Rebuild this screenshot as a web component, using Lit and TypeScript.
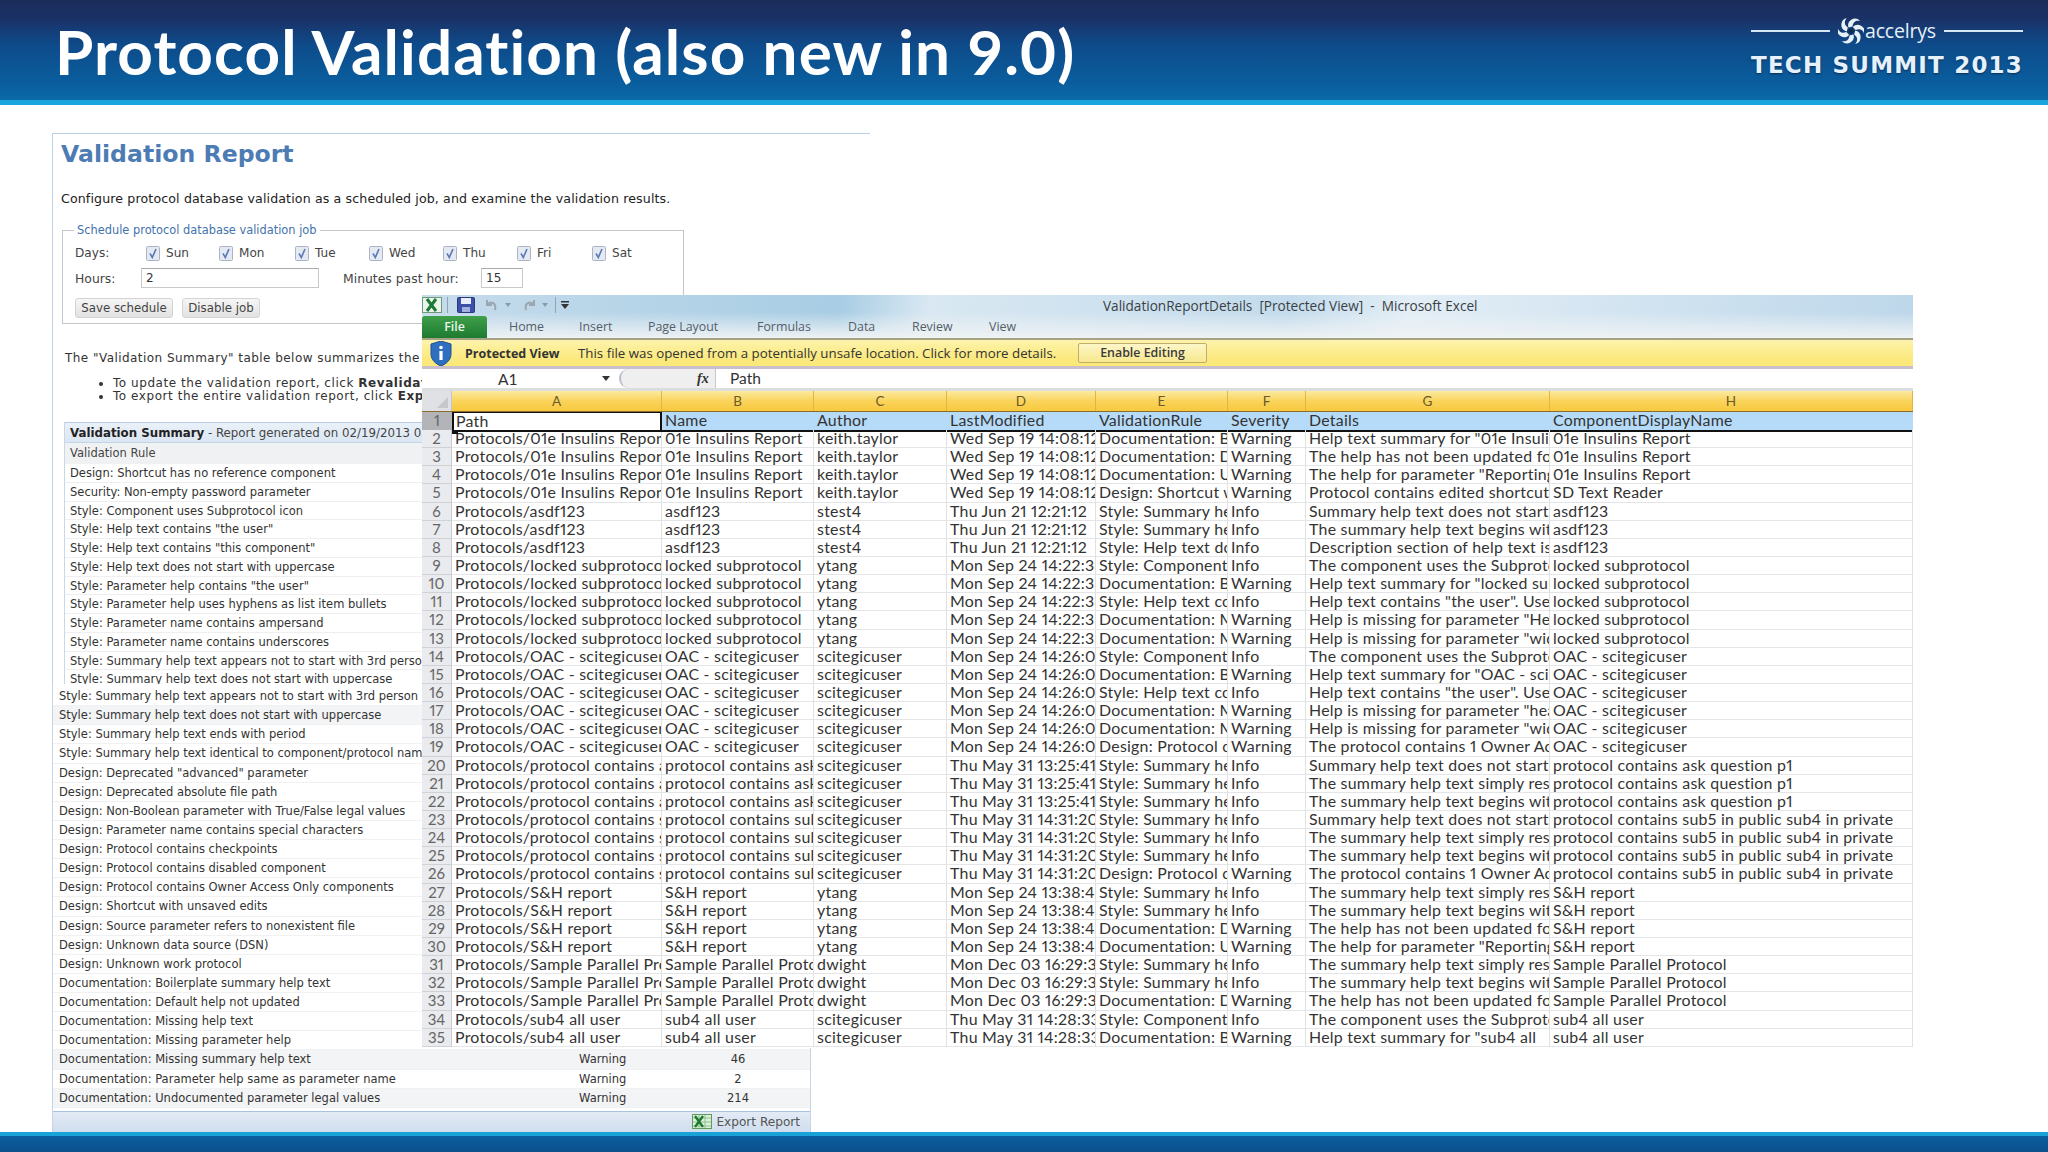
import { LitElement, html, css, svg } from "lit";
import { customElement } from "lit/decorators.js";

const RULES_TOP = [
  "Design: Shortcut has no reference component",
  "Security: Non-empty password parameter",
  "Style: Component uses Subprotocol icon",
  'Style: Help text contains "the user"',
  'Style: Help text contains "this component"',
  "Style: Help text does not start with uppercase",
  'Style: Parameter help contains "the user"',
  "Style: Parameter help uses hyphens as list item bullets",
  "Style: Parameter name contains ampersand",
  "Style: Parameter name contains underscores",
  "Style: Summary help text appears not to start with 3rd person",
  "Style: Summary help text does not start with uppercase",
];
const RULES_BOTTOM: [string, string, string][] = [
  ["Style: Summary help text appears not to start with 3rd person", "", ""],
  ["Style: Summary help text does not start with uppercase", "", ""],
  ["Style: Summary help text ends with period", "", ""],
  ["Style: Summary help text identical to component/protocol name", "", ""],
  ['Design: Deprecated "advanced" parameter', "", ""],
  ["Design: Deprecated absolute file path", "", ""],
  ["Design: Non-Boolean parameter with True/False legal values", "", ""],
  ["Design: Parameter name contains special characters", "", ""],
  ["Design: Protocol contains checkpoints", "", ""],
  ["Design: Protocol contains disabled component", "", ""],
  ["Design: Protocol contains Owner Access Only components", "", ""],
  ["Design: Shortcut with unsaved edits", "", ""],
  ["Design: Source parameter refers to nonexistent file", "", ""],
  ["Design: Unknown data source (DSN)", "", ""],
  ["Design: Unknown work protocol", "", ""],
  ["Documentation: Boilerplate summary help text", "", ""],
  ["Documentation: Default help not updated", "", ""],
  ["Documentation: Missing help text", "", ""],
  ["Documentation: Missing parameter help", "", ""],
  ["Documentation: Missing summary help text", "Warning", "46"],
  ["Documentation: Parameter help same as parameter name", "Warning", "2"],
  ["Documentation: Undocumented parameter legal values", "Warning", "214"],
];

const DOC_B = "Documentation: Boilerplate";
const DOC_D = "Documentation: Default";
const DOC_U = "Documentation: Undocumented";
const DOC_M = "Documentation: Missing";
const SUM = "Style: Summary help";
const COMP = "Style: Component";
const HELPC = "Style: Help text contains";
const PROT = "Design: Protocol contains";
const G_START = "Summary help text does not start";
const G_BEGIN = "The summary help text begins with";
const G_SIMPLY = "The summary help text simply restates";
const G_COMP = "The component uses the Subprotocol";
const G_USER = 'Help text contains "the user". Use';
const G_OWNER = "The protocol contains 1 Owner Access";
const G_UPD = "The help has not been updated for";
const G_REP = 'The help for parameter "Reporting';

type Group = { a: string; b: string; c: string; d: string; rows: [string, string, string, string?][] };
const GROUPS: Group[] = [
  { a: "Protocols/01e Insulins Report", b: "01e Insulins Report", c: "keith.taylor", d: "Wed Sep 19 14:08:12 PDT", rows: [
    [DOC_B, "Warning", 'Help text summary for "01e Insulins'],
    [DOC_D, "Warning", G_UPD],
    [DOC_U, "Warning", G_REP],
    ["Design: Shortcut with", "Warning", "Protocol contains edited shortcuts", "SD Text Reader"],
  ] },
  { a: "Protocols/asdf123", b: "asdf123", c: "stest4", d: "Thu Jun 21 12:21:12", rows: [
    [SUM, "Info", G_START],
    [SUM, "Info", G_BEGIN],
    ["Style: Help text does", "Info", "Description section of help text is"],
  ] },
  { a: "Protocols/locked subprotocol", b: "locked subprotocol", c: "ytang", d: "Mon Sep 24 14:22:38 PDT", rows: [
    [COMP, "Info", G_COMP],
    [DOC_B, "Warning", 'Help text summary for "locked sub'],
    [HELPC, "Info", G_USER],
    [DOC_M, "Warning", 'Help is missing for parameter "Header'],
    [DOC_M, "Warning", 'Help is missing for parameter "width'],
  ] },
  { a: "Protocols/OAC - scitegicuser", b: "OAC - scitegicuser", c: "scitegicuser", d: "Mon Sep 24 14:26:00 PDT", rows: [
    [COMP, "Info", G_COMP],
    [DOC_B, "Warning", 'Help text summary for "OAC - scitegic'],
    [HELPC, "Info", G_USER],
    [DOC_M, "Warning", 'Help is missing for parameter "header'],
    [DOC_M, "Warning", 'Help is missing for parameter "width'],
    [PROT, "Warning", G_OWNER],
  ] },
  { a: "Protocols/protocol contains ask question p1", b: "protocol contains ask question p1", c: "scitegicuser", d: "Thu May 31 13:25:41", rows: [
    [SUM, "Info", G_START],
    [SUM, "Info", G_SIMPLY],
    [SUM, "Info", G_BEGIN],
  ] },
  { a: "Protocols/protocol contains sub5 in public", b: "protocol contains sub5 in public sub4 in private", c: "scitegicuser", d: "Thu May 31 14:31:20 PDT", rows: [
    [SUM, "Info", G_START],
    [SUM, "Info", G_SIMPLY],
    [SUM, "Info", G_BEGIN],
    [PROT, "Warning", G_OWNER],
  ] },
  { a: "Protocols/S&H report", b: "S&H report", c: "ytang", d: "Mon Sep 24 13:38:48 PDT", rows: [
    [SUM, "Info", G_SIMPLY],
    [SUM, "Info", G_BEGIN],
    [DOC_D, "Warning", G_UPD],
    [DOC_U, "Warning", G_REP],
  ] },
  { a: "Protocols/Sample Parallel Protocol", b: "Sample Parallel Protocol", c: "dwight", d: "Mon Dec 03 16:29:38 PST", rows: [
    [SUM, "Info", G_SIMPLY],
    [SUM, "Info", G_BEGIN],
    [DOC_D, "Warning", G_UPD],
  ] },
  { a: "Protocols/sub4 all user", b: "sub4 all user", c: "scitegicuser", d: "Thu May 31 14:28:33 PDT", rows: [
    [COMP, "Info", G_COMP],
    [DOC_B, "Warning", 'Help text summary for "sub4 all'],
  ] },
];
const ROWS: string[][] = GROUPS.flatMap((g) =>
  g.rows.map((r) => [g.a, g.b, g.c, g.d, r[0], r[1], r[2], r[3] ?? g.b])
);
const HEAD = ["Path", "Name", "Author", "LastModified", "ValidationRule", "Severity", "Details", "ComponentDisplayName"];
const DAYS = ["Sun", "Mon", "Tue", "Wed", "Thu", "Fri", "Sat"];
const TABS = ["Home", "Insert", "Page Layout", "Formulas", "Data", "Review", "View"];
const BLADES = [0, 60, 120, 180, 240, 300];

@customElement("app-root")
export class AppRoot extends LitElement {
  static styles = css`
    :host { display: block; position: relative; width: 2048px; height: 1152px; overflow: hidden; background: #fff; font-family: "DejaVu Sans", sans-serif; }
    .page { display: flex; flex-direction: column; height: 1152px; }

    .banner { height: 100px; flex: none; display: flex; justify-content: space-between; padding: 0 25px 0 55px;
      background: linear-gradient(180deg, #1b2c5a 0%, #1a3166 18%, #0e4b8a 45%, #0a5c9c 80%, #0b69a8 100%); border-bottom: 5px solid #1aa6dc; }
    .title { margin: 0; font-family: Lato, sans-serif; font-weight: 700; font-size: 62px; line-height: 102px; color: #fff; white-space: nowrap; letter-spacing: 1.1px; }
    .logo { width: 272px; display: flex; flex-direction: column; padding-top: 17px; box-sizing: border-box; }
    .logo-top { display: flex; align-items: center; height: 28px; gap: 8px; }
    .logo-line { flex: 1; height: 1.5px; background: #d6e8f5; }
    .logo-name { font-family: "Open Sans", sans-serif; font-size: 19.5px; color: #e6f0f8; line-height: 28px; letter-spacing: -0.2px; margin-left: -7px; }
    .logo-sub { font-family: "DejaVu Sans", sans-serif; font-weight: 700; font-size: 23px; line-height: 28px; margin-top: 6px; color: #e6f2fb; white-space: nowrap; letter-spacing: 1.2px; text-shadow: 0 1px 2px #0a2c55; }

    .main { flex: 1; min-height: 0; display: flex; flex-direction: column; padding: 28px 0 0 52px; box-sizing: border-box; }
    .report { width: 818px; height: 551px; flex: none; box-sizing: border-box; overflow: hidden; border-top: 1px solid #b9cfe8; border-left: 1px solid #bcd0e8; color: #222; font-size: 12.6px; }
    .report h2 { margin: 6px 0 0 8px; font-size: 23.6px; line-height: 28px; height: 28px; color: #4d7cb4; font-weight: 700; white-space: nowrap; }
    .intro { margin: 23px 0 0 8px; line-height: 16px; white-space: nowrap; letter-spacing: 0.13px; }
    fieldset { margin: 16px 0 0 9px; padding: 7px 0 6px 12px; width: 622px; height: 101px; box-sizing: border-box; border: 1px solid #c3c6ca; min-width: 0; }
    legend { margin-left: -1px; padding: 0 3px; color: #4373ab; font-size: 11.4px; line-height: 14px; white-space: nowrap; }
    .days { display: grid; grid-template-columns: 71px 73px 76px 74px 74px 74px 75px auto; height: 18px; align-items: center; font-size: 12.1px; color: #444; }
    .day { display: flex; align-items: center; gap: 6px; }
    .cb { width: 14px; height: 15px; display: block; flex: none; }
    .hours { display: flex; align-items: center; margin-top: 6px; height: 20px; font-size: 12.4px; color: #444; }
    .hours .lb1 { width: 66px; }
    .hours .lb2 { width: 138px; margin-left: 24px; white-space: nowrap; }
    .inp { height: 20px; box-sizing: border-box; border: 1px solid #c9c9c9; border-top-color: #aaa; padding-left: 4px; line-height: 18px; background: #fff; font-size: 12px; color: #333; }
    .inp.h { width: 178px; } .inp.m { width: 42px; }
    .btns { display: flex; gap: 9px; margin-top: 10px; }
    .btn { height: 20px; line-height: 19px; box-sizing: border-box; border: 1px solid #d4d4d4; border-radius: 3px; background: linear-gradient(#f6f6f6, #e2e2e2); text-align: center; font-size: 11.8px; color: #444; white-space: nowrap; }
    .btn.s { width: 98px; } .btn.d { width: 78px; }
    .para { margin: 26px 0 0 12px; line-height: 16px; font-size: 12px; white-space: nowrap; color: #333; letter-spacing: 0.45px; }
    .list { margin: 11px 0 0 47px; padding: 0 0 0 13px; line-height: 13px; font-size: 12px; color: #333; letter-spacing: 0.55px; white-space: nowrap; }
    .list li { padding: 0; }
    .sum { margin: 19px 0 0 11px; width: 760px; border-left: 1px solid #c8d8ea; }
    .sum-h { height: 21px; line-height: 20px; box-sizing: border-box; padding-left: 5px; background: linear-gradient(#e9f0f8, #dce7f3); border-top: 1px solid #b7cde4; border-bottom: 1px solid #c3d5e8; font-size: 11.8px; color: #444; white-space: nowrap; }
    .sum-h b { color: #222; }
    .sum-c { height: 21px; line-height: 20px; padding-left: 5px; background: #f0f1f2; font-size: 11.5px; color: #444; }
    .sum-r { height: 18.75px; line-height: 18px; padding-left: 5px; font-size: 11.5px; color: #333; border-bottom: 1px solid #efefef; box-sizing: border-box; white-space: nowrap; }

    .lower { width: 759px; flex: 1; min-height: 0; display: flex; flex-direction: column; box-sizing: border-box; padding-top: 3px; border-left: 1px solid #c5d6e9; border-right: 1px solid #c5d6e9; }
    .lr { display: grid; grid-template-columns: 520px 100px 118px; height: 19.13px; flex: none; line-height: 19px; padding-left: 6px; font-size: 11.5px; color: #333; white-space: nowrap; box-sizing: border-box; border-bottom: 1px solid #f1f1f1; }
    .lr.alt { background: #f3f4f5; }
    .lr .n { text-align: center; }
    .lfoot { margin-top: 3px; flex: 1; display: flex; justify-content: flex-end; align-items: center; gap: 4px; padding-right: 10px; border-top: 1px solid #a8c3df; background: linear-gradient(#e3ebf5, #cfdded); font-size: 12.1px; color: #555; }

    .foot { height: 20px; flex: none; box-sizing: border-box; border-top: 4px solid #19a2d8; background: linear-gradient(#0a5f9f, #0c4f8c); }

    .xl { position: absolute; left: 422px; top: 295px; width: 1491px; height: 753px; background: #fff; font-family: Lato, sans-serif; color: #333; overflow: hidden; }
    .xtitle { height: 20px; display: flex; align-items: center; }
    .xtop { height: 43px; background: linear-gradient(100deg, #c6dcec 0%, #a8cde4 28%, #d9e8f2 34%, #c3dbec 58%, #e3eef6 66%, #bdd7ea 100%); }
    .xtop-fade { background: linear-gradient(transparent 40%, #eef2f4 100%); height: 43px; display: flex; flex-direction: column; }
    .xic { display: block; flex: none; }
    .sep { width: 1px; height: 16px; background: #8fa3b4; flex: none; }
    .sep.a { margin: 0 9px 0 5px; } .sep.b { margin: 0 5px 0 7px; }
    .ml10 { margin-left: 10px; } .ml6 { margin-left: 6px; } .ml11 { margin-left: 11px; }
    .xname { font-family: "Open Sans", sans-serif; font-size: 13.6px; color: #3a3f44; white-space: pre; margin-left: 534px; }
    .tabs { height: 23px; margin-top: 0; display: grid; grid-template-columns: 65px 22px 70px 69px 109px 91px 64px 77px 1fr; align-items: center; font-family: "Open Sans", sans-serif; font-size: 12.4px; color: #555e6a; }
    .file { height: 22px; align-self: end; background: linear-gradient(#3fa04a, #1d7a30); border-radius: 3px 3px 0 0; color: #eaf6ea; text-align: center; line-height: 21px; font-weight: 600; }
    .ybar { height: 31px; box-sizing: border-box; display: flex; align-items: center; background: linear-gradient(#fdf3ad, #fbe97f 70%, #fae877); border-top: 2px solid #a7a283; border-bottom: 3px solid #cabfcc; font-family: "Open Sans", sans-serif; font-size: 13.3px; color: #333; padding-left: 8px; }
    .ybar b { margin-left: 13px; font-weight: 700; font-size: 12.5px; width: 113px; white-space: nowrap; }
    .ybtn { margin-left: 15px; width: 129px; height: 20px; box-sizing: border-box; border: 1px solid #c2ae6c; border-radius: 2px; background: linear-gradient(#fdf6c8, #f8e88e); text-align: center; line-height: 18px; font-weight: 600; font-size: 12.4px; color: #3b3b3b; }
    .ymsg { width: 485px; white-space: nowrap; }
    .fbar { height: 19px; display: flex; align-items: center; font-size: 15.5px; }
    .fname { width: 180px; padding-left: 76px; box-sizing: border-box; }
    .farrow { width: 0; height: 0; border: 4px solid transparent; border-top: 5px solid #333; border-bottom: 0; flex: none; }
    .fcurve { margin-left: 9px; width: 70px; height: 19px; box-sizing: border-box; border-left: 2px solid #bbc; border-radius: 10px 0 0 10px; background: #efefef; flex: none; }
    .ffx { width: 26px; padding-left: 8px; box-sizing: border-box; font-family: "Liberation Serif", serif; font-style: italic; font-weight: 700; font-size: 14px; background: #efefef; flex: none; height: 19px; line-height: 19px; }
    .fval { border-left: 1px solid #c8c8c8; padding-left: 14px; height: 19px; line-height: 19px; flex: 1; }
    .gap { height: 3px; background: #dcdddf; }
    .row { display: grid; grid-template-columns: 30px 210px 152px 133px 149px 132px 78px 244px 363px; }
    .colh { height: 21px; box-sizing: border-box; border-bottom: 2px solid #8b6c2a; }
    .colh > div { background: linear-gradient(#fcea9f, #f9d257 55%, #f8c93f); border-right: 1px solid #e2b345; text-align: center; line-height: 20px; font-size: 13.5px; color: #6b5a2c; }
    .colh > .corner { background: #dfe1e4; border-right: 1px solid #c2c5c9; position: relative; }
    .tri { position: absolute; right: 3px; bottom: 3px; width: 0; height: 0; border-left: 11px solid transparent; border-bottom: 11px solid #c4c7cb; }
    .r { height: 18.15px; font-size: 15.9px; line-height: 16.5px; letter-spacing: 0.26px; font-variant-numeric: proportional-nums; }
    .r > div { box-sizing: border-box; padding-left: 3px; overflow: hidden; white-space: nowrap; border-right: 1px solid #dfe1e3; border-bottom: 1px solid #e4e5e7; }
    .r > .rh { background: #e9ebee; border-right: 1px solid #c9ccd0; border-bottom: 1px solid #cfd2d6; padding: 0; text-align: center; color: #666; font-size: 15px; letter-spacing: 0; }
    .r.h1 { height: 18px; }
    .r.h1 > div { background: #b6dbf8; border-right: 0; border-bottom: 2px solid #111; padding-left: 3px; }
    .r.h1 > .rh { background: #b2b4b7; border-bottom: 1px solid #a0a2a5; padding: 0; }
    .r.h1 > .act { background: #fff; border: 2px solid #111; border-top: 1px solid #111; padding-left: 2px; position: relative; overflow: visible; }
    .handle { position: absolute; left: -2px; bottom: -4px; width: 6px; height: 4px; background: #111; }
  `;

  private check() {
    return html`<svg class="cb" viewBox="0 0 14 15"><rect x=".5" y=".5" width="13" height="14" rx="1" fill="#e4e9f2" stroke="#aab4c4"/><path d="M4 7.5 L6.3 11.5 L10 3" fill="none" stroke="#5a78b8" stroke-width="1.6"/></svg>`;
  }

  private swirl() {
    return html`<svg class="xic" width="26" height="26" viewBox="-13 -13 26 26">
      ${BLADES.map((a) => svg`<path transform="rotate(${a})" d="M-2.5 -3.5 C-4 -8 -1 -12 4 -12.5 C6.5 -12.5 8 -11.5 9 -10 C5.5 -11 2 -9.5 1.5 -4.5 Z" fill="#e8f1f8"/>`)}
      <circle r="2.6" fill="#0d2c52"/>
    </svg>`;
  }

  render() {
    return html`<div class="page">
      <header class="banner">
        <h1 class="title">Protocol Validation (also new in 9.0)</h1>
        <div class="logo">
          <div class="logo-top"><span class="logo-line"></span>${this.swirl()}<span class="logo-name">accelrys</span><span class="logo-line"></span></div>
          <div class="logo-sub">TECH SUMMIT 2013</div>
        </div>
      </header>

      <main class="main">
        <section class="report">
          <h2>Validation Report</h2>
          <div class="intro">Configure protocol database validation as a scheduled job, and examine the validation results.</div>
          <fieldset>
            <legend>Schedule protocol database validation job</legend>
            <div class="days"><span>Days:</span>${DAYS.map((d) => html`<span class="day">${this.check()}${d}</span>`)}</div>
            <div class="hours"><span class="lb1">Hours:</span><span class="inp h">2</span><span class="lb2">Minutes past hour:</span><span class="inp m">15</span></div>
            <div class="btns"><div class="btn s">Save schedule</div><div class="btn d">Disable job</div></div>
          </fieldset>
          <div class="para">The "Validation Summary" table below summarizes the validation results.</div>
          <ul class="list">
            <li>To update the validation report, click <b>Revalidate</b></li>
            <li>To export the entire validation report, click <b>Export</b></li>
          </ul>
          <div class="sum">
            <div class="sum-h"><b>Validation Summary</b> - Report generated on 02/19/2013 03:00</div>
            <div class="sum-c">Validation Rule</div>
            ${RULES_TOP.map((r) => html`<div class="sum-r">${r}</div>`)}
          </div>
        </section>
        <section class="lower">
          ${RULES_BOTTOM.map((r, i) => html`<div class="lr ${i === 1 || i === 19 || i === 21 ? "alt" : ""}"><span>${r[0]}</span><span>${r[1]}</span><span class="n">${r[2]}</span></div>`)}
          <div class="lfoot">
            <svg class="xic" width="20" height="15" viewBox="0 0 20 15"><rect x=".5" y=".5" width="19" height="14" fill="#dff0dc" stroke="#5c9c5c"/><path d="M1 4h18M1 8h18M1 12h18M7 1v13M13 1v13" stroke="#8cc08c" stroke-width="1"/><path d="M3 2 L11 13 M11 2 L3 13" stroke="#1f7a30" stroke-width="2.4"/></svg>
            <span>Export Report</span>
          </div>
        </section>
      </main>
      <footer class="foot"></footer>

      <section class="xl">
        <div class="xtop"><div class="xtop-fade">
          <div class="xtitle">
            <svg class="xic" width="20" height="16" viewBox="0 0 20 16"><rect x=".5" y=".5" width="19" height="15" fill="#eaf4ea" stroke="#6f9a78"/><path d="M5 2 L14 14 M14 2 L5 14" stroke="#1c7a34" stroke-width="3"/></svg>
            <span class="sep a"></span>
            <svg class="xic" width="18" height="16" viewBox="0 0 18 16"><rect x=".5" y=".5" width="17" height="15" rx="1" fill="#3b4fa8" stroke="#2a387e"/><rect x="4" y="1" width="10" height="6" fill="#e6ecf8"/><rect x="5" y="10" width="8" height="5" fill="#9fb0dc"/></svg>
            <svg class="xic ml10" width="14" height="14" viewBox="0 0 14 14"><path d="M2 2 V7 H7 M2 7 C5 3 12 4 10 12" fill="none" stroke="#9aa6b0" stroke-width="2"/></svg>
            <svg class="xic ml6" width="6" height="4" viewBox="0 0 6 4"><path d="M0 0H6L3 4Z" fill="#8d99a5"/></svg>
            <svg class="xic ml11" width="14" height="14" viewBox="0 0 14 14"><path d="M12 2 V7 H7 M12 7 C9 3 2 4 4 12" fill="none" stroke="#9aa6b0" stroke-width="2"/></svg>
            <svg class="xic ml6" width="6" height="4" viewBox="0 0 6 4"><path d="M0 0H6L3 4Z" fill="#8d99a5"/></svg>
            <span class="sep b"></span>
            <svg class="xic" width="8" height="8" viewBox="0 0 8 8"><path d="M0 0H8V1.5H0Z M0 3H8L4 8Z" fill="#333"/></svg>
            <span class="xname">ValidationReportDetails  [Protected View]  -  Microsoft Excel</span>
          </div>
          <div class="tabs"><div class="file">File</div><span></span>${TABS.map((t) => html`<span>${t}</span>`)}</div>
        </div></div>
        <div class="ybar">
          <svg class="xic" width="22" height="25" viewBox="0 0 22 25"><path d="M11 0 L21 3 V13 C21 19 16 23 11 25 C6 23 1 19 1 13 V3 Z" fill="#2f6fc0" stroke="#1f4f98"/><circle cx="11" cy="6.5" r="1.8" fill="#fff"/><rect x="9.4" y="10" width="3.2" height="9" fill="#fff"/></svg>
          <b>Protected View</b>
          <span class="ymsg">This file was opened from a potentially unsafe location. Click for more details.</span>
          <span class="ybtn">Enable Editing</span>
        </div>
        <div class="fbar">
          <span class="fname">A1</span><span class="farrow"></span><span class="fcurve"></span><span class="ffx">fx</span><span class="fval">Path</span>
        </div>
        <div class="gap"></div>
        <div class="row colh"><div class="corner"><span class="tri"></span></div>${"ABCDEFGH".split("").map((c) => html`<div>${c}</div>`)}</div>
        <div class="row r h1"><div class="rh">1</div><div class="act">${HEAD[0]}<span class="handle"></span></div>${HEAD.slice(1).map((h) => html`<div>${h}</div>`)}</div>
        ${ROWS.map((r, i) => html`<div class="row r"><div class="rh">${i + 2}</div>${r.map((c) => html`<div>${c}</div>`)}</div>`)}
      </section>
    </div>`;
  }
}
